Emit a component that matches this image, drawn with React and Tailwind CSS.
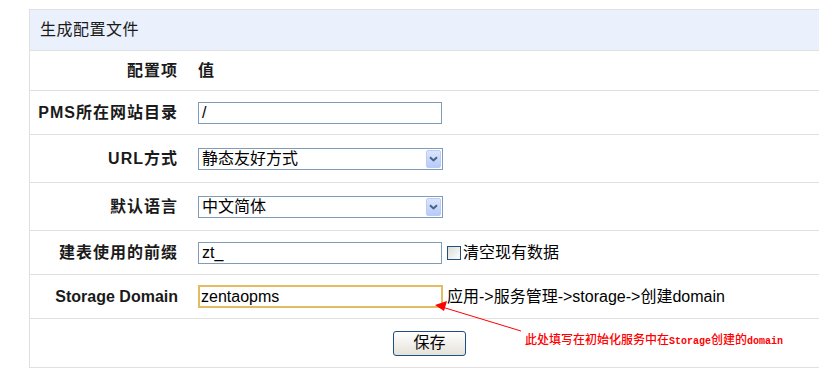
import React from "react";

const FONT = "font-['Liberation_Sans','Noto_Sans_CJK_SC',sans-serif]";

const Row = ({ label, height, wide = true, children }) => (
  <div className={`flex items-center border-b border-[#e0e0e0] ${height}`}>
    <div
      className={`w-[158px] shrink-0 pr-[10px] text-right text-[16px] font-bold text-[#1a1a1a] ${
        wide ? "tracking-[1px]" : ""
      }`}
    >
      {label}
    </div>
    <div className="flex items-center pl-[10px]">{children}</div>
  </div>
);

const TextInput = ({ value, focused }) => (
  <div
    className={
      focused
        ? "flex h-[23px] w-[245px] items-center border-2 border-[#e2bb62] bg-white pl-[1px] text-[16px] text-black"
        : "flex h-[22px] w-[244px] items-center border border-[#7f9db9] bg-white pl-[3px] text-[16px] text-black"
    }
  >
    {value}
  </div>
);

const Select = ({ value }) => (
  <div className="flex h-[22px] w-[245px] items-center justify-between border border-[#7f9db9] bg-white pl-[3px] pr-[1px] text-[16px] text-black">
    <span>{value}</span>
    <span className="flex h-[18px] w-[15px] items-center justify-center rounded-[2px] border border-[#b9cdf5] bg-linear-to-b from-[#dbe6fd] to-[#b7cbf9]">
      <svg width="9" height="6" viewBox="0 0 9 6">
        <path d="M1 1.2 L4.5 4.5 L8 1.2" fill="none" stroke="#4d6185" strokeWidth="2" />
      </svg>
    </span>
  </div>
);

export default function App() {
  return (
    <div className={`relative h-[376px] w-full overflow-hidden bg-white ${FONT}`}>
      <div className="pl-[29px] pt-[9px]">
        <div className="w-[800px] border-l border-t border-[#e0e0e0]">
          {/* header */}
          <div className="flex h-[41px] items-center border-b border-[#e0e0e0] bg-[#eaf1fd] pl-[10px] text-[16px] tracking-[0.5px] text-[#1a1a1a]">
            生成配置文件
          </div>

          <Row label="配置项" height="h-[40px]">
            <span className="text-[16px] font-bold text-[#1a1a1a]">值</span>
          </Row>

          <Row label="PMS所在网站目录" height="h-[44px]">
            <TextInput value="/" />
          </Row>

          <Row label="URL方式" height="h-[48px]">
            <Select value="静态友好方式" />
          </Row>

          <Row label="默认语言" height="h-[48px]">
            <Select value="中文简体" />
          </Row>

          <Row label="建表使用的前缀" height="h-[44px]">
            <TextInput value="zt_" />
            <span className="ml-[5px] h-[14px] w-[14px] border border-[#1c5180] bg-linear-to-br from-[#dcdcd6] to-white" />
            <span className="ml-[2px] text-[16px] text-black">清空现有数据</span>
          </Row>

          <Row label="Storage Domain" height="h-[44px]" wide={false}>
            <TextInput value="zentaopms" focused />
            <span className="ml-[4px] text-[16px] text-black">
              应用-&gt;服务管理-&gt;storage-&gt;创建domain
            </span>
          </Row>

          {/* actions */}
          <div className="flex h-[49px] items-center justify-center border-b border-[#e0e0e0]">
            <button className="flex h-[25px] w-[73px] items-center justify-center rounded-[3px] border border-[#1f4f86] bg-linear-to-b from-white to-[#e4e2d8] text-[16px] text-black">
              保存
            </button>
          </div>
        </div>
      </div>

      {/* red annotation */}
      <svg className="absolute left-0 top-0" width="819" height="376">
        <line x1="521" y1="331" x2="442" y2="307" stroke="#ff0000" strokeWidth="1" />
        <polygon points="435,305 447,301 444,311" fill="#ff0000" />
      </svg>
      <div className="absolute left-[525px] top-[331px] text-[12px] font-medium leading-[16px] text-[#ff0000] font-['Noto_Sans_CJK_SC',sans-serif]">
        此处填写在初始化服务中在
        <span className="font-['Liberation_Mono',monospace] text-[10px] font-bold">Storage</span>
        创建的
        <span className="font-['Liberation_Mono',monospace] text-[10px] font-bold">domain</span>
      </div>
    </div>
  );
}
